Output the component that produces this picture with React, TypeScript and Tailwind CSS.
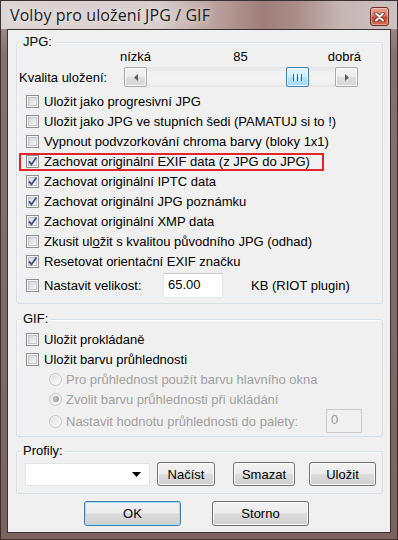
import React from "react";

function CheckBox({ checked }: { checked?: boolean }) {
  return (
    <span className="relative flex h-[13px] w-[13px] shrink-0 items-center justify-center border border-[#8e8f8f] bg-[#f4f4f4]">
      <span className="h-[9px] w-[9px] border border-[#c3c7cc] bg-[linear-gradient(135deg,#d3d6db,#f8f8f8)]" />
      {checked && (
        <svg className="absolute left-[0px] top-[0px]" width="11" height="11" viewBox="0 0 11 11">
          <path d="M2 5.4 L4.4 8.4 L9.4 1.4" stroke="#3f5388" strokeWidth="1.8" fill="none" />
        </svg>
      )}
    </span>
  );
}

function Radio({ selected }: { selected?: boolean }) {
  return (
    <span className="relative flex h-[13px] w-[13px] shrink-0 items-center justify-center rounded-full border border-[#c4c4c4] bg-[#f6f6f6]">
      <span className="h-[9px] w-[9px] rounded-full bg-[linear-gradient(135deg,#e0e0e0,#f9f9f9)]" />
      {selected && (
        <span className="absolute h-[6px] w-[6px] rounded-full bg-[radial-gradient(circle_at_35%_35%,#c8c8c8,#8c8c8c)]" />
      )}
    </span>
  );
}

function CbRow({ checked, children }: { checked?: boolean; children: React.ReactNode }) {
  return (
    <div className="flex h-[20px] items-center">
      <CheckBox checked={checked} />
      <span className="ml-[5px] whitespace-nowrap leading-[15px]">{children}</span>
    </div>
  );
}

function Btn({ children, className, def }: { children: React.ReactNode; className: string; def?: boolean }) {
  return (
    <div
      className={`flex items-center justify-center rounded-[3px] border bg-[linear-gradient(180deg,#f2f2f2_0%,#ebebeb_50%,#dddddd_50%,#cfcfcf_100%)] text-[13px] leading-[15px] text-black ${
        def ? "border-[#3c7fb1] shadow-[inset_0_0_0_1px_#a8dcf6]" : "border-[#707070] shadow-[inset_0_0_0_1px_#fbfbfb]"
      } ${className}`}
    >
      {children}
    </div>
  );
}

function Group({ label, className, children }: { label: string; className: string; children: React.ReactNode }) {
  return (
    <div className={`relative rounded-[3px] border border-[#d5dfe5] shadow-[inset_1px_1px_0_#ffffff] ${className}`}>
      <span className="absolute left-[4px] top-[-9px] bg-[#f0f0f0] px-[2px] leading-[15px]">{label}</span>
      {children}
    </div>
  );
}

function ArrowBtn({ dir }: { dir: "l" | "r" }) {
  return (
    <div className="flex h-[20px] w-[23px] shrink-0 items-center justify-center rounded-[2px] border border-[#a9a9a9] bg-[linear-gradient(180deg,#f5f5f5_0%,#ececec_50%,#dedede_51%,#d6d6d6_100%)] shadow-[inset_0_0_0_1px_#fafafa]">
      <svg width="4" height="7" viewBox="0 0 4 7">
        {dir === "l" ? <path d="M4 0 L0 3.5 L4 7 Z" fill="#5c5c5c" /> : <path d="M0 0 L4 3.5 L0 7 Z" fill="#5c5c5c" />}
      </svg>
    </div>
  );
}

function Scroll() {
  return (
    <div className="flex h-[20px] w-[234px] items-center bg-[linear-gradient(180deg,#e2e2e2_0%,#f1f1f1_25%,#f3f3f3_75%,#e6e6e6_100%)]">
      <ArrowBtn dir="l" />
      <div className="ml-[139px] flex h-[20px] w-[23px] shrink-0 items-center justify-center gap-[1px] rounded-[2px] border border-[#3c7fb1] bg-[linear-gradient(180deg,#e5f5fd_0%,#d3eefb_50%,#b6e2f8_51%,#a5d9f5_100%)] shadow-[inset_0_0_0_1px_#eaf7fd]">
        <span className="h-[7px] w-[1px] bg-[#2f6a98]" />
        <span className="h-[7px] w-[1px] bg-[#ffffff]" />
        <span className="h-[7px] w-[1px] bg-[#2f6a98]" />
        <span className="h-[7px] w-[1px] bg-[#ffffff]" />
        <span className="h-[7px] w-[1px] bg-[#2f6a98]" />
      </div>
      <div className="ml-[26px]">
        <ArrowBtn dir="r" />
      </div>
    </div>
  );
}

export default function App() {
  return (
    <div className="flex h-[540px] w-[398px] flex-col border border-[#3b3030] bg-[linear-gradient(180deg,#b3a09e_0%,#86706d_10%,#7c6360_100%)] px-[6px] pb-[6px] font-['Liberation_Sans',Arial,sans-serif] text-[13px] text-black">
      <div className="-mx-[6px] flex h-[28px] shrink-0 items-start bg-[linear-gradient(90deg,#dcd5d5_0%,#d6cdcc_40%,#b89e9a_55%,#9f7e7a_66%,#a88b87_74%,#c6b6b4_86%,#cdc2c1_100%)]">
        <span className="ml-[9px] mt-[4px] font-['Open_Sans',sans-serif] text-[16px] leading-[20px] tracking-[0.1px] text-[#1b1b1b] [text-shadow:0_0_8px_#ffffff]">
          Volby pro uložení JPG / GIF
        </span>
        <div className="ml-auto mr-[8px] mt-[6px] flex h-[19px] w-[19px] items-center justify-center rounded-[3px] border border-[#6b2d24] bg-[linear-gradient(180deg,#e9a899_0%,#d9765f_45%,#c7462f_55%,#d46d57_100%)] shadow-[inset_0_0_0_1px_rgba(255,255,255,0.35)]">
          <svg width="11" height="10" viewBox="0 0 11 10">
            <path d="M2 1.5 L9 8.5 M9 1.5 L2 8.5" stroke="#5a2a22" strokeWidth="3.4" strokeLinecap="round" />
            <path d="M2 1.5 L9 8.5 M9 1.5 L2 8.5" stroke="#ffffff" strokeWidth="2" strokeLinecap="round" />
          </svg>
        </div>
      </div>

      <div className="flex flex-1 flex-col border border-[#3a3232] bg-[#f0f0f0]">
        <Group label="JPG:" className="ml-[8px] mr-[7px] mt-[12px] pb-[5px] pt-[6px]">
          <div className="ml-[103px] grid h-[15px] w-[241px] grid-cols-[1fr_auto_1fr] leading-[15px]">
            <span>nízká</span>
            <span>85</span>
            <span className="text-right">dobrá</span>
          </div>
          <div className="mt-[3px] flex h-[20px] items-center pl-[2px]">
            <span className="w-[105px] leading-[15px]">Kvalita uložení:</span>
            <Scroll />
          </div>
          <div className="mt-[4px] flex flex-col pl-[9px]">
            <CbRow>Uložit jako progresivní JPG</CbRow>
            <CbRow>Uložit jako JPG ve stupních šedi (PAMATUJ si to !)</CbRow>
            <CbRow>Vypnout podvzorkování chroma barvy (bloky 1x1)</CbRow>
            <div className="relative">
              <CbRow checked>Zachovat originální EXIF data (z JPG do JPG)</CbRow>
              <div className="absolute left-[-7px] top-[2px] h-[18px] w-[305px] border-2 border-[#e0262b]" />
            </div>
            <CbRow checked>Zachovat originální IPTC data</CbRow>
            <CbRow checked>Zachovat originální JPG poznámku</CbRow>
            <CbRow checked>Zachovat originální XMP data</CbRow>
            <CbRow>
              Zkusit ul<span className="underline">o</span>žit s kvalitou původního JPG (odhad)
            </CbRow>
            <CbRow checked>Resetovat orientační EXIF značku</CbRow>
          </div>
          <div className="mt-[2px] flex h-[25px] items-center pl-[9px]">
            <CheckBox />
            <span className="ml-[5px] w-[119px] leading-[15px]">Nastavit velikost:</span>
            <div className="flex h-[25px] w-[60px] items-start border border-[#e2e5ea] border-t-[#c9ccd2] bg-white pl-[4px] pt-[3px] leading-[15px]">
              65.00
            </div>
            <span className="ml-[28px] leading-[15px]">KB (RIOT plugin)</span>
          </div>
        </Group>

        <Group label="GIF:" className="ml-[8px] mr-[7px] mt-[15px] pb-[3px] pt-[9px]">
          <div className="flex flex-col pl-[9px]">
            <CbRow>Uložit prokládaně</CbRow>
            <CbRow>Uložit barvu průhlednosti</CbRow>
          </div>
          <div className="flex flex-col pl-[32px] text-[#a0a0a0]">
            <div className="flex h-[20px] items-center">
              <Radio />
              <span className="ml-[4px] leading-[15px]">Pro průhlednost použít barvu hlavního okna</span>
            </div>
            <div className="flex h-[20px] items-center">
              <Radio selected />
              <span className="ml-[4px] leading-[15px]">Zvolit barvu průhlednosti při ukládání</span>
            </div>
            <div className="flex h-[24px] items-center">
              <Radio />
              <span className="ml-[4px] leading-[15px]">Nastavit hodnotu průhlednosti do palety:</span>
              <div className="ml-auto mr-[20px] h-[24px] w-[36px] border border-[#c9cacc] bg-[#f0f0f0] pl-[4px] pt-[2px] leading-[15px] text-[#9a9a9a]">
                0
              </div>
            </div>
          </div>
        </Group>

        <Group label="Profily:" className="ml-[8px] mr-[7px] mt-[14px] pb-[7px] pt-[10px]">
          <div className="flex h-[24px] items-center pl-[8px]">
            <div className="flex h-[23px] w-[125px] items-center justify-end border border-[#e2e5ea] bg-white pr-[8px]">
              <svg width="9" height="5" viewBox="0 0 9 5">
                <path d="M0 0 L9 0 L4.5 5 Z" fill="#000000" />
              </svg>
            </div>
            <Btn className="ml-[7px] h-[24px] w-[58px]">Načíst</Btn>
            <Btn className="ml-[18px] h-[24px] w-[62px]">Smazat</Btn>
            <Btn className="ml-[14px] h-[24px] w-[67px]">Uložit</Btn>
          </div>
        </Group>

        <div className="mt-[7px] flex pl-[76px]">
          <Btn def className="h-[25px] w-[97px]">OK</Btn>
          <Btn className="ml-[31px] h-[25px] w-[97px]">Storno</Btn>
        </div>
      </div>
    </div>
  );
}
